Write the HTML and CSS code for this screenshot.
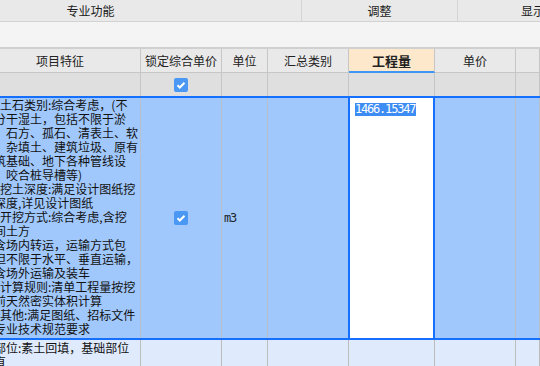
FILE: index.html
```html
<!DOCTYPE html>
<html lang="zh-CN">
<head>
  <meta charset="UTF-8" />
  <title>清单项目</title>
  <link rel="stylesheet" href="styles.css">
</head>
<body>
  <div class="groups">
    <div class="grp grp-pro">专业功能</div>
    <div class="grp grp-adj">调整</div>
    <div class="grp grp-show">显示</div>
  </div>
  <div class="band"></div>

  <div class="row head">
    <div class="cell c-feat">项目特征</div>
    <div class="cell">锁定综合单价</div>
    <div class="cell">单位</div>
    <div class="cell">汇总类别</div>
    <div class="cell c-qty">工程量</div>
    <div class="cell">单价</div>
    <div class="cell"></div>
  </div>

  <div class="row filter">
    <div class="cell"></div>
    <div class="cell center"><span class="chk"><svg viewBox="0 0 14 14" width="14" height="14"><path d="M3.5 7.2l2.3 2.3 4.7-4.8" fill="none" stroke="#fff" stroke-width="2"/></svg></span></div>
    <div class="cell"></div>
    <div class="cell"></div>
    <div class="cell"></div>
    <div class="cell"></div>
    <div class="cell"></div>
  </div>

  <div class="row sel">
    <div class="cell feat">
      <div class="ln">土石类别:综合考虑，(不</div>
      <div class="ln cut">分干湿土，包括不限于淤</div>
      <div class="ln cut">、石方、孤石、清表土、软</div>
      <div class="ln cut">、杂填土、建筑垃圾、原有</div>
      <div class="ln cut">筑基础、地下各种管线设</div>
      <div class="ln cut">、咬合桩导槽等)</div>
      <div class="ln">挖土深度:满足设计图纸挖</div>
      <div class="ln cut">深度,详见设计图纸</div>
      <div class="ln">开挖方式:综合考虑,含挖</div>
      <div class="ln cut">间土方</div>
      <div class="ln cut">含场内转运，运输方式包</div>
      <div class="ln cut">但不限于水平、垂直运输，</div>
      <div class="ln cut">含场外运输及装车</div>
      <div class="ln">计算规则:清单工程量按挖</div>
      <div class="ln cut">前天然密实体积计算</div>
      <div class="ln">其他:满足图纸、招标文件</div>
      <div class="ln cut">专业技术规范要求</div>
    </div>
    <div class="cell center"><span class="chk"><svg viewBox="0 0 14 14" width="14" height="14"><path d="M3.5 7.2l2.3 2.3 4.7-4.8" fill="none" stroke="#fff" stroke-width="2"/></svg></span></div>
    <div class="cell middle mono">m3</div>
    <div class="cell"></div>
    <div class="cell qty-edit"><span class="picked mono">1466.15347</span></div>
    <div class="cell"></div>
    <div class="cell"></div>
  </div>

  <div class="row next">
    <div class="cell feat">
      <div class="ln cut">部位:素土回填，基础部位</div>
      <div class="ln cut">直</div>
    </div>
    <div class="cell"></div>
    <div class="cell"></div>
    <div class="cell"></div>
    <div class="cell"></div>
    <div class="cell"></div>
    <div class="cell"></div>
  </div>
</body>
</html>
```

FILE: styles.css
```css
body {
  margin: 0;
  width: 540px;
  height: 366px;
  overflow: hidden;
  font-family: "Noto Sans CJK SC", "Noto Sans", sans-serif;
  font-size: 12px;
  color: #222;
  background: #f4f4f4;
}

.groups {
  display: flex;
  height: 21px;
  background: #e9e9e9;
  border-bottom: 1px solid #d2d2d2;
  white-space: nowrap;
}

.grp {
  flex: none;
  display: flex;
  align-items: center;
  justify-content: center;
  border-right: 1px solid #d4d4d4;
  color: #1a1a1a;
}

.grp-pro {
  width: 181px;
  padding-right: 120px;
}

.grp-adj {
  width: 155px;
}

.grp-show {
  width: 150px;
}

.band {
  height: 25px;
  background: #f4f4f4;
  border-bottom: 2px solid #d0d0d0;
}

.row {
  display: grid;
  grid-template-columns: 141px 81px 46px 81px 86px 81px 1fr;
}

.cell {
  border-right: 1px solid #c6c6c6;
  overflow: hidden;
  white-space: nowrap;
}

.head {
  height: 24px;
  background: #e9e9e9;
}

.head .cell {
  display: flex;
  align-items: center;
  justify-content: center;
  border-bottom: 1px solid #c6c6c6;
}

.head .c-feat {
  padding-right: 20px;
}

.head .c-qty {
  background: #fde8cc;
  border-bottom: 2px solid #3f96f5;
  font-weight: bold;
  font-size: 13px;
}

.filter {
  height: 23px;
  background: #dfdfdf;
}

.center {
  display: flex;
  align-items: center;
  justify-content: center;
}

.middle {
  display: flex;
  align-items: center;
  padding-left: 2px;
}

.chk {
  display: block;
  width: 14px;
  height: 14px;
  border-radius: 2px;
  background: #4a98f4;
}

.chk svg {
  display: block;
}

.sel {
  height: 240px;
  background: #a0c8fc;
  border-top: 2px solid #1570ff;
  border-bottom: 2px solid #1570ff;
}

.sel .cell {
  border-right-color: #b8bfc8;
}

.feat {
  line-height: 14px;
  color: #111;
}

.ln {
  white-space: nowrap;
}

.ln.cut {
  margin-left: -6px;
}

.mono {
  font-family: "DejaVu Sans Mono", "Liberation Mono", monospace;
  font-size: 12px;
  letter-spacing: -1.2px;
}

.qty-edit {
  background: #fff;
  border-right: 2px solid #1570ff !important;
  box-shadow: -1px 0 0 #1570ff, inset 1px 0 0 #1570ff;
  padding: 1px 0 0 6px;
}

.picked {
  display: inline-block;
  background: #3d8cf4;
  color: #fff;
  line-height: 13px;
  padding-right: 1px;
}

.next {
  height: 40px;
  background: #dfeafc;
}

.next .cell {
  border-right-color: #bcbcbc;
}

.next .feat {
  padding-top: 1px;
}
```
